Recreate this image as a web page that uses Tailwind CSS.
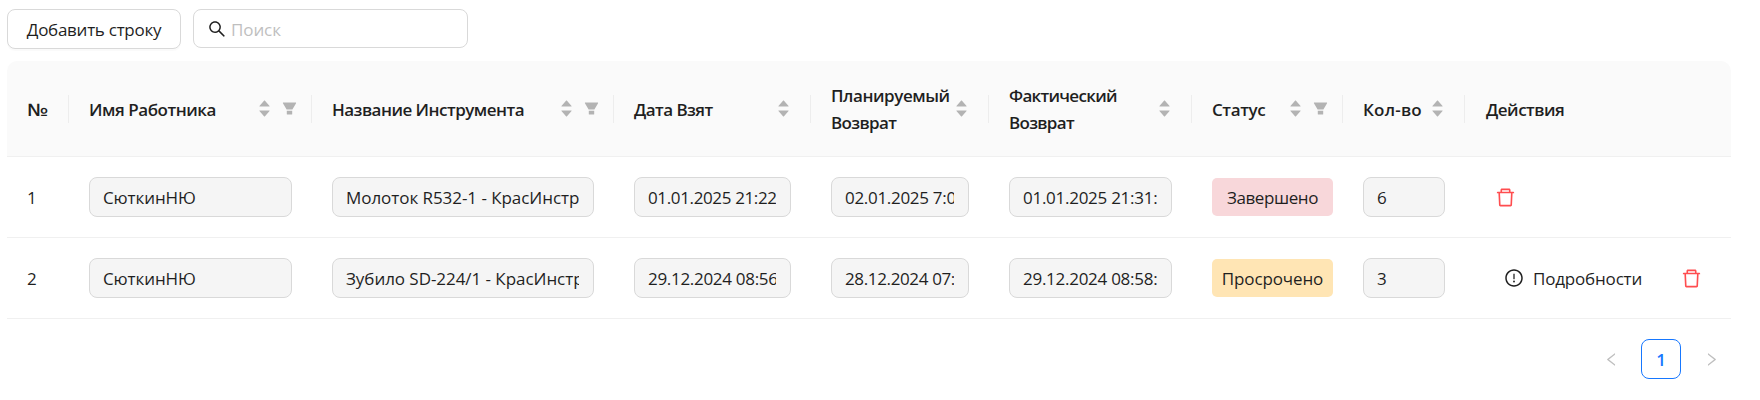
<!DOCTYPE html>
<html lang="ru">
<head>
<meta charset="utf-8">
<title>Выдача инструмента</title>
<script src="https://cdn.jsdelivr.net/npm/@tailwindcss/browser@4"></script>
</head>
<body class="bg-white font-['Open_Sans','Noto_Sans',sans-serif] text-[17px] leading-[27px] text-[#1f1f1f]">
<svg class="hidden">
  <symbol id="sort-up" viewBox="0 0 1024 1024"><path d="M858.9 689L530.5 308.2c-9.4-10.9-27.5-10.9-37 0L165.1 689c-12.2 14.2-1.2 35 18.5 35h656.8c19.7 0 30.7-20.8 18.5-35z"/></symbol>
  <symbol id="sort-down" viewBox="0 0 1024 1024"><path d="M840.4 300H183.6c-19.7 0-30.7 20.8-18.5 35l328.4 380.8c9.4 10.9 27.5 10.9 37 0L858.9 335c12.2-14.2 1.2-35-18.5-35z"/></symbol>
  <symbol id="filter" viewBox="0 0 1024 1024"><path d="M349 838c0 17.7 14.2 32 31.8 32h262.4c17.6 0 31.8-14.3 31.8-32V642H349v196zm531.1-684H143.9c-24.5 0-39.8 26.7-27.5 48l221.3 376h348.8l221.3-376c12.1-21.3-3.2-48-27.7-48z"/></symbol>
  <symbol id="trash" viewBox="0 0 1024 1024"><path d="M360 184h-8c4.4 0 8-3.6 8-8v8h304v-8c0 4.4 3.6 8 8 8h-8v72h72v-80c0-35.3-28.7-64-64-64H352c-35.3 0-64 28.7-64 64v80h72v-72zm504 72H160c-17.7 0-32 14.3-32 32v32c0 4.4 3.6 8 8 8h60.4l24.7 523c1.6 34.1 29.8 61 63.9 61h454c34.2 0 62.3-26.8 63.9-61l24.7-523H888c4.4 0 8-3.6 8-8v-32c0-17.7-14.3-32-32-32zM731.3 840H292.7l-24.2-512h487l-24.2 512z"/></symbol>
  <symbol id="alert" viewBox="0 0 1024 1024"><path d="M512 64C264.6 64 64 264.6 64 512s200.6 448 448 448 448-200.6 448-448S759.4 64 512 64zm0 820c-205.4 0-372-166.6-372-372s166.6-372 372-372 372 166.6 372 372-166.6 372-372 372z"/><path d="M464 688a48 48 0 1096 0 48 48 0 10-96 0zm24-112h48c4.4 0 8-3.6 8-8V296c0-4.4-3.6-8-8-8h-48c-4.4 0-8 3.6-8 8v272c0 4.4 3.6 8 8 8z"/></symbol>
  <symbol id="search" viewBox="0 0 1024 1024"><path d="M909.6 854.5L649.9 594.8C690.2 542.7 712 479 712 412c0-80.2-31.3-155.4-87.9-212.1-56.6-56.7-132-87.9-212.1-87.9s-155.5 31.3-212.1 87.9C143.2 256.5 112 331.8 112 412c0 80.1 31.3 155.5 87.9 212.1C256.5 680.8 331.8 712 412 712c67 0 130.6-21.8 182.7-62l259.7 259.6a8.2 8.2 0 0011.6 0l43.6-43.5a8.2 8.2 0 000-11.6zM570.4 570.4C528 612.7 471.8 636 412 636s-116-23.3-158.4-65.6C211.3 528 188 471.8 188 412s23.3-116.1 65.6-158.4C296 211.3 352.2 188 412 188s116.1 23.2 158.4 65.6S636 352.2 636 412s-23.3 116.1-65.6 158.4z"/></symbol>
  <symbol id="chevron" viewBox="0 0 1024 1024"><path d="M724 218.3V141c0-6.7-7.7-10.4-12.9-6.3L260.3 486.8a31.86 31.86 0 000 50.3l450.8 352.1c5.3 4.1 12.9.4 12.9-6.3v-77.3c0-4.9-2.3-9.6-6.1-12.6l-360-281 360-281.1c3.8-3 6.1-7.7 6.1-12.6z"/></symbol>
</svg>

<main class="w-[1731px] pl-[7px] pt-[9px]">
  <div class="flex items-start gap-3">
    <button class="flex h-10 w-[174px] items-center justify-center whitespace-nowrap rounded-[8px] border border-[#d9d9d9] bg-white tracking-[-0.27px] shadow-[0_2px_0_rgba(0,0,0,0.02)]">Добавить строку</button>
    <label class="flex h-[39px] w-[275px] items-center rounded-[8px] border border-[#d9d9d9] pl-[13px]">
      <svg class="size-5 shrink-0 fill-current"><use href="#search"/></svg>
      <input class="ml-[4px] w-[220px] pt-px tracking-[-0.1px] outline-none placeholder:text-[#bfbfbf]" placeholder="Поиск">
    </label>
  </div>

  <table class="mt-[12px] w-[1724px] table-fixed border-separate border-spacing-0">
    <colgroup>
      <col class="w-[62px]"><col class="w-[243px]"><col class="w-[302px]"><col class="w-[197px]"><col class="w-[178px]"><col class="w-[203px]"><col class="w-[151px]"><col class="w-[122px]"><col class="w-[266px]">
    </colgroup>
    <thead>
      <tr class="h-24 text-left [&>th]:border-b [&>th]:border-[#f0f0f0] [&>th]:bg-[#fafafa] [&>th]:p-0 [&>th]:font-semibold">
        <th class="rounded-tl-[10px]"><div class="flex h-7 items-center border-r border-[#ededed] pl-5"><span class="origin-left scale-x-[1.22] pt-[2px]">№</span></div></th>
        <th><div class="flex h-7 items-center border-r border-[#ededed] pl-5 pr-[13px]"><span class="flex-1 pt-[2px] tracking-[-0.45px]">Имя Работника</span><span class="flex flex-col fill-[#b3b3b3]"><svg class="size-[15px]"><use href="#sort-up"/></svg><svg class="-mt-[5px] size-[15px]"><use href="#sort-down"/></svg></span><svg class="ml-[9px] size-[17px] fill-[#b3b3b3]"><use href="#filter"/></svg></div></th>
        <th><div class="flex h-7 items-center border-r border-[#ededed] pl-5 pr-[13px]"><span class="flex-1 pt-[2px] tracking-[-0.52px]">Название Инструмента</span><span class="flex flex-col fill-[#b3b3b3]"><svg class="size-[15px]"><use href="#sort-up"/></svg><svg class="-mt-[5px] size-[15px]"><use href="#sort-down"/></svg></span><svg class="ml-[9px] size-[17px] fill-[#b3b3b3]"><use href="#filter"/></svg></div></th>
        <th><div class="flex h-7 items-center border-r border-[#ededed] pl-5 pr-[19px]"><span class="flex-1 pt-[2px] tracking-[-0.55px]">Дата Взят</span><span class="flex flex-col fill-[#b3b3b3]"><svg class="size-[15px]"><use href="#sort-up"/></svg><svg class="-mt-[5px] size-[15px]"><use href="#sort-down"/></svg></span></div></th>
        <th><div class="flex h-7 items-center border-r border-[#ededed] pl-5 pr-[19px]"><span class="flex-1"><span class="tracking-[-0.43px]">Планируемый</span><br><span class="tracking-[-0.65px]">Возврат</span></span><span class="flex flex-col fill-[#b3b3b3]"><svg class="size-[15px]"><use href="#sort-up"/></svg><svg class="-mt-[5px] size-[15px]"><use href="#sort-down"/></svg></span></div></th>
        <th><div class="flex h-7 items-center border-r border-[#ededed] pl-5 pr-[19px]"><span class="flex-1 tracking-[-0.7px]">Фактический<br>Возврат</span><span class="flex flex-col fill-[#b3b3b3]"><svg class="size-[15px]"><use href="#sort-up"/></svg><svg class="-mt-[5px] size-[15px]"><use href="#sort-down"/></svg></span></div></th>
        <th><div class="flex h-7 items-center border-r border-[#ededed] pl-5 pr-[13px]"><span class="flex-1 pt-[2px] tracking-[-0.4px]">Статус</span><span class="flex flex-col fill-[#b3b3b3]"><svg class="size-[15px]"><use href="#sort-up"/></svg><svg class="-mt-[5px] size-[15px]"><use href="#sort-down"/></svg></span><svg class="ml-[9px] size-[17px] fill-[#b3b3b3]"><use href="#filter"/></svg></div></th>
        <th><div class="flex h-7 items-center border-r border-[#ededed] pl-5 pr-[19px]"><span class="flex-1 whitespace-nowrap pt-[2px] tracking-[0.2px]">Кол-во</span><span class="flex flex-col fill-[#b3b3b3]"><svg class="size-[15px]"><use href="#sort-up"/></svg><svg class="-mt-[5px] size-[15px]"><use href="#sort-down"/></svg></span></div></th>
        <th class="rounded-tr-[10px]"><div class="flex h-7 items-center pl-[21px] pt-[2px] tracking-[-0.5px]">Действия</div></th>
      </tr>
    </thead>
    <tbody class="[&_td]:border-b [&_td]:border-[#f0f0f0] [&_td]:px-5 [&_td]:py-0 [&_input]:block [&_input]:h-10 [&_input]:w-full [&_input]:rounded-[8px] [&_input]:border [&_input]:border-[#d9d9d9] [&_input]:bg-[#f5f5f5] [&_input]:pl-[13px] [&_input]:pr-[14px] [&_input]:text-[#1f1f1f]">
      <tr class="h-[81px]">
        <td>1</td>
        <td><input disabled class="tracking-[-0.1px]" value="СюткинНЮ"></td>
        <td><input disabled class="tracking-[-0.05px]" value="Молоток R532-1 - КрасИнструмент"></td>
        <td><input disabled class="tracking-[-0.36px]" value="01.01.2025 21:22"></td>
        <td><input disabled class="tracking-[-0.3px]" value="02.01.2025 7:00:00"></td>
        <td><input disabled class="tracking-[-0.27px]" value="01.01.2025 21:31:"></td>
        <td><div class="flex h-[38px] w-[121px] items-center justify-center rounded-[5px] bg-[#f8d7da] tracking-[-0.4px]">Завершено</div></td>
        <td><input disabled value="6"></td>
        <td><button class="flex size-10 items-center justify-center"><svg class="size-[23px] fill-[#ff4d4f]"><use href="#trash"/></svg></button></td>
      </tr>
      <tr class="h-[81px]">
        <td>2</td>
        <td><input disabled class="tracking-[-0.1px]" value="СюткинНЮ"></td>
        <td><input disabled class="tracking-[-0.05px]" value="Зубило SD-224/1 - КрасИнструмент"></td>
        <td><input disabled class="tracking-[-0.3px]" value="29.12.2024 08:56:30"></td>
        <td><input disabled class="tracking-[-0.36px]" value="28.12.2024 07:00:00"></td>
        <td><input disabled class="tracking-[-0.27px]" value="29.12.2024 08:58:"></td>
        <td><div class="flex h-[38px] w-[121px] items-center justify-center rounded-[5px] bg-[#ffe5b4] tracking-[-0.13px]">Просрочено</div></td>
        <td><input disabled value="3"></td>
        <td><div class="flex gap-[10px]"><button class="flex h-10 w-[176px] items-center gap-[9px] pl-[19px] tracking-[-0.18px]"><svg class="size-5 shrink-0 fill-current"><use href="#alert"/></svg>Подробности</button><button class="flex size-10 items-center justify-center"><svg class="size-[23px] fill-[#ff4d4f]"><use href="#trash"/></svg></button></div></td>
      </tr>
    </tbody>
  </table>

  <nav class="mt-5 flex justify-end gap-[10px]">
    <button class="flex size-10 items-center justify-center"><svg class="size-[17px] fill-[#bfbfbf]"><use href="#chevron"/></svg></button>
    <button class="flex size-10 items-center justify-center rounded-[8px] border border-[#1677ff] font-semibold text-[#1677ff]">1</button>
    <button class="flex size-10 items-center justify-center"><svg class="size-[17px] rotate-180 fill-[#bfbfbf]"><use href="#chevron"/></svg></button>
  </nav>
</main>
</body>
</html>
